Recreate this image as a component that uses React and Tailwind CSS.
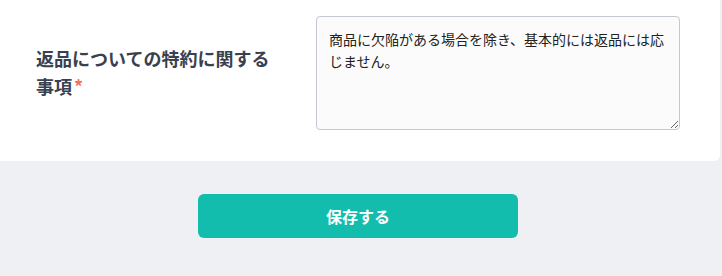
import React, { useState } from 'react';

const App = () => {
  const [policy, setPolicy] = useState('商品に欠陥がある場合を除き、基本的には返品には応じません。');

  return (
    <div
      className="min-h-screen w-[722px] h-[276px] bg-[#eff0f4] overflow-hidden"
      style={{ fontFamily: '"Noto Sans CJK JP", "Noto Sans", sans-serif' }}
    >
      <div className="w-[720px] h-[161px] bg-white rounded-br-md flex items-start">
        <div className="w-[316px] pl-[36px] pr-[40px] pt-[44px]">
          <label className="block text-[18px] leading-[28px] font-bold text-[#394150]">
            返品についての特約に関する事項
            <span className="ml-[2px] text-[#f0745b]">*</span>
          </label>
        </div>
        <textarea
          value={policy}
          onChange={(e) => setPolicy(e.target.value)}
          className="w-[364px] h-[114px] mt-[16px] px-[12px] py-[11px] text-[14px] leading-[22px] text-[#222222] bg-[#fbfbfc] border border-[#c4c8d3] rounded-[4px] outline-none"
        />
      </div>

      <div className="pl-[198px] pt-[33px]">
        <button className="w-[320px] h-[44px] bg-[#12bdad] text-white text-[16px] font-bold rounded-[6px]">
          保存する
        </button>
      </div>
    </div>
  );
};

export default App;
